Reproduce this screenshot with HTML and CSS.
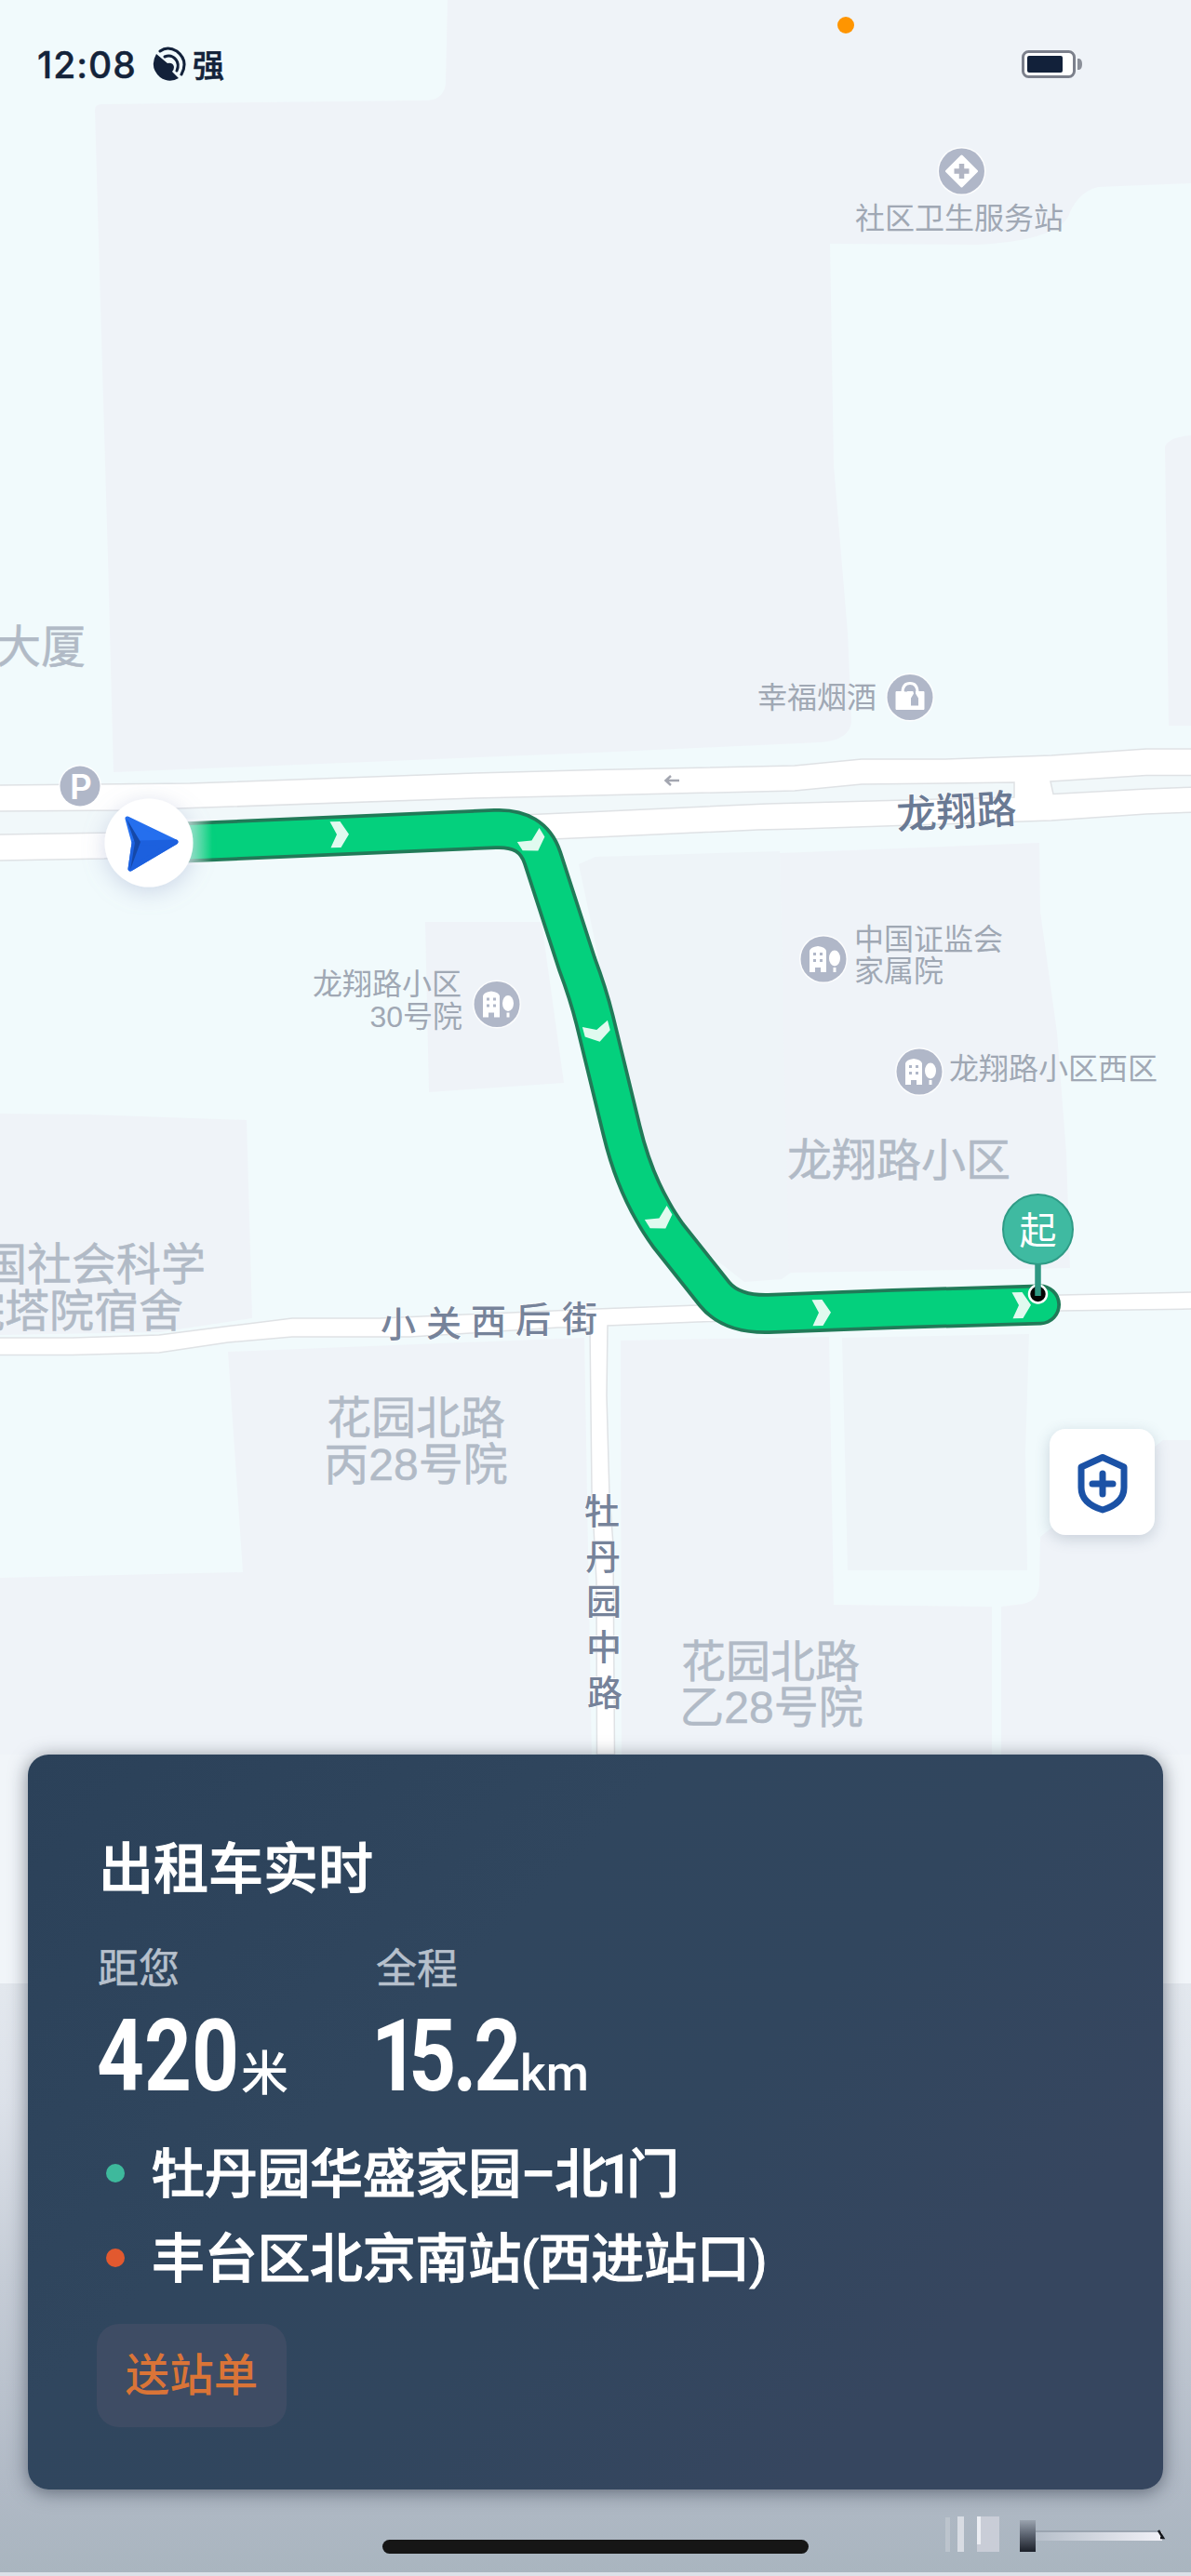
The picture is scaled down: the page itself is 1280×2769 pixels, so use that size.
FILE: index.html
```
<!DOCTYPE html>
<html lang="zh-CN">

<head>
    <meta charset="utf-8">
    <title>出租车实时</title>
    <link rel="stylesheet" href="styles.css">
</head>

<body>
<div class="page">
    <!--地图-->
    <svg class="map" width="1280" height="2769" viewBox="0 0 1280 2769">
        <defs>
            <linearGradient id="fade" x1="0" y1="0" x2="0" y2="1">
                <stop offset="0" stop-color="#e3e8ee" />
                <stop offset="0.2" stop-color="#dce1e9" />
                <stop offset="0.5" stop-color="#c5ccd6" />
                <stop offset="0.85" stop-color="#b0b9c5" />
                <stop offset="1" stop-color="#a9b5bf" />
            </linearGradient>
            <linearGradient id="routeStart" gradientUnits="userSpaceOnUse" x1="203" y1="0" x2="228" y2="0">
                <stop offset="0" stop-color="#fff" stop-opacity="0.6" />
                <stop offset="1" stop-color="#fff" stop-opacity="0" />
            </linearGradient>
            <linearGradient id="barDark" x1="0" y1="0" x2="0" y2="1">
                <stop offset="0" stop-color="#9aa3ae" />
                <stop offset="0.45" stop-color="#5d6572" />
                <stop offset="1" stop-color="#1c2029" />
            </linearGradient>
            <linearGradient id="barLine" x1="0" y1="0" x2="1" y2="0">
                <stop offset="0" stop-color="#b6bfca" />
                <stop offset="1" stop-color="#f1f1f7" />
            </linearGradient>
            <filter id="glow" x="-50%" y="-50%" width="200%" height="200%">
                <feDropShadow dx="0" dy="5" stdDeviation="12" flood-color="#8f9cc4" flood-opacity="0.38" />
            </filter>
            <path id="chevron" d="M-10-14H1L10 0L1 14H-10L-3 0Z" />
            <g id="house">
                <circle r="26" class="halo" />
                <circle r="24.500" class="poi" />
                <path fill="#fff" d="M-15-9Q-14-13-6-14Q2-13 3-9V14H-3V9H-9V14H-15Z" />
                <ellipse cx="12" cy="-1" rx="6" ry="8.500" fill="#fff" />
                <path fill="#fff" d="M10.500 9h3v5h-3z" />
                <path class="poi" d="M-11-7h3v3h-3zM-4-7h3v3h-3zM-11 0h3v3h-3zM-4 0h3v3h-3z" />
            </g>
        </defs>

        <!--地块-->
        <rect width="1280" height="2769" fill="#f1fafc" />
        <g class="land">
            <path d="M102 118Q102 112 110 112L460 108Q477 106 479 90L481 0H1280V197L1180 201Q1160 206 1150 228Q1142 258 1050 263L892 262L896 500L911 680L915 775Q914 796 880 798L640 809L122 830L116 600L105 225Z" />
            <path d="M1252 480Q1256 470 1280 468V780H1256Z" />
            <path class="pale" d="M622 929L640 921L838 915L850 1368L840 1375L800 1378L700 1300Z" />
            <path d="M838 917L1117 906L1118 980L1136 1110L1146 1240L1150 1363L848 1368Z" />
            <path d="M457 991H582L606 1164L461 1174Z" />
            <path d="M0 1197L96 1198L265 1204L271 1417L171 1432L0 1435Z" />
            <path d="M245 1453L628 1438L636 1890H0V1696L261 1690Z" />
            <path d="M667 1441L891 1437L896 1725L1066 1727V1890H668Z" />
            <path class="pale" d="M905 1438L1106 1434L1102 1560L1104 1688H911Z" />
            <path d="M1118 1652L1250 1548H1280V2100H1076V1727L1100 1724Q1118 1720 1117 1700Z" />
        </g>
        <path fill="#f1f5f9" d="M0 1886H1280V2132H0Z" />
        <path fill="url(#fade)" d="M0 2132H1280V2769H0Z" />
        <path fill="#dbe1e8" d="M0 2765H1280V2769H0Z" />

        <!--道路-->
        <g class="road">
            <path d="M-5 844L204 842L510 831L640 827.500L854 823L926 816H1015L1130 812L1232 805H1285V873L1232 875L1130 882L860 891L815 892L640 900L112 923L-5 925Z" />
            <path d="M-5 1438L78 1438L171 1435L249 1425L314 1417H408L640 1407L750 1403L1140 1392L1285 1389V1407L1140 1409L750 1421L653 1425L652 1500L655 1607L659 1660L660.500 1886H641.500L641 1700L636 1603L634 1427L600 1427L441 1437H314L245 1443L171 1454L78 1456.500H-5Z" />
            <g class="median">
                <path d="M-5 872L135 871L510 858L640 855L854 850L926 843L1090 841V857L936 861L824 864L640 872.500L122 895L-5 897Z" />
                <path d="M1129 840L1232 833.500H1285V846L1232 848L1132 853.500Z" />
            </g>
        </g>
        <path d="M730 839H716M721 834L715.500 839L721 844" fill="none" stroke="#a3a6b0" stroke-width="2.500" />

        <!--文字标注-->
        <g class="area">
            <text x="-4" y="712">大厦</text>
            <text x="-67" y="1376">中国社会科学</text>
            <text x="-43" y="1426">院塔院宿舍</text>
            <text x="966" y="1264" text-anchor="middle">龙翔路小区</text>
            <text x="447" y="1541" text-anchor="middle">花园北路</text>
            <text x="447" y="1591" text-anchor="middle">丙28号院</text>
            <text x="828" y="1803" text-anchor="middle">花园北路</text>
            <text x="829" y="1852" text-anchor="middle">乙28号院</text>
        </g>
        <g class="place">
            <text x="919" y="246">社区卫生服务站</text>
            <text x="814" y="761">幸福烟酒</text>
            <text x="496" y="1069" text-anchor="end">龙翔路小区</text>
            <text x="497" y="1104" text-anchor="end">30号院</text>
            <text x="918" y="1021">中国证监会</text>
            <text x="918" y="1055">家属院</text>
            <text x="1020" y="1160">龙翔路小区西区</text>
        </g>
        <g class="street">
            <text class="main" transform="translate(1028 873) rotate(-3)" x="0" y="15" text-anchor="middle">龙翔路</text>
            <text x="409 458 506 554 604" y="1437 1436 1434 1432 1431">小关西后街</text>
            <text x="628 629 630 630 631" y="1638 1687 1735 1784 1833">牡丹园中路</text>
        </g>

        <!--兴趣点图标-->
        <g transform="translate(1033.500 184)">
            <circle r="26" class="halo" />
            <circle r="24.500" class="poi" />
            <path d="M0-16L16 0L0 16L-16 0Z" fill="#fff" stroke="#fff" stroke-width="3" stroke-linejoin="round" />
            <path d="M0-8V8M-8 0H8" stroke="#b1b5c3" stroke-width="5.500" />
        </g>
        <g transform="translate(978 749.500)">
            <circle r="26" class="halo" />
            <circle r="24.500" class="poi" />
            <path d="M-15-6H15V13H-15Z" fill="#fff" stroke="#fff" stroke-linejoin="round" />
            <path d="M-8-5Q-8-15 0-15Q8-15 8-5" fill="none" stroke="#fff" stroke-width="3" />
            <path class="poi" d="M-6-6Q-5-12 0-12Q5-12 6-6V-4L9 1V9H1V1L4-4Q3-9 0-9Q-3-9-3-6Z" />
        </g>
        <use href="#house" x="534" y="1079.500" />
        <use href="#house" x="885" y="1031" />
        <use href="#house" x="988" y="1152" />
        <circle cx="86" cy="845" r="23" class="halo" />
        <circle cx="86" cy="845" r="21.500" class="poi" />
        <text class="parking" x="87" y="858.500" text-anchor="middle">P</text>

        <!--路线-->
        <g class="route">
            <path class="edge" d="M185 906L532 891Q572 889 583 922L620 1036Q632 1068 639 1096L668 1215Q680 1265 702 1303Q708 1314 718 1328L768 1391Q786 1413 826 1412L960 1407L1118 1402.500" />
            <path class="fill" d="M185 906L532 891Q572 889 583 922L620 1036Q632 1068 639 1096L668 1215Q680 1265 702 1303Q708 1314 718 1328L768 1391Q786 1413 826 1412L960 1407L1118 1402.500" />
        </g>
        <rect x="200" y="880" width="40" height="50" fill="url(#routeStart)" />
        <g fill="#fff" fill-opacity="0.88">
            <use href="#chevron" transform="translate(365 897) rotate(-2)" />
            <use href="#chevron" transform="translate(573 906) rotate(58)" />
            <use href="#chevron" transform="translate(642 1110) rotate(75)" />
            <use href="#chevron" transform="translate(710 1312) rotate(58)" />
            <use href="#chevron" transform="translate(883 1411) rotate(-2)" />
            <use href="#chevron" transform="translate(1098 1403) rotate(-2)" />
        </g>

        <!--当前车辆-->
        <g transform="translate(160 906)">
            <circle r="47.500" fill="#fff" filter="url(#glow)" />
            <g stroke-linejoin="round" stroke-width="5">
                <path d="M-23-26L29-1L-20 28L-16 0Z" fill="#256fee" stroke="#256fee" />
                <path d="M-20 28L-16 0L-10 0L29-1Z" fill="#1c60de" stroke="#1c60de" />
                <path d="M-24-26L-9-1L-20 29L-15 0Z" fill="#1548a8" />
            </g>
        </g>

        <!--起点-->
        <circle cx="1115.500" cy="1391" r="9.500" fill="#050505" stroke="#fff" stroke-width="2.500" />
        <path d="M1115.500 1355V1393" stroke="#2f9883" stroke-width="6.500" />
        <circle cx="1115.500" cy="1321.500" r="37.500" fill="#3fbaa1" stroke="#2f9b86" stroke-width="2" />
        <text class="start" x="1115.500" y="1337" text-anchor="middle">起</text>

        <!--右下角竖条-->
        <path d="M1016 2706h5v37h-5z" fill="#bcc4cd" />
        <path d="M1029 2705h7v38h-7z" fill="#d8dce3" />
        <path d="M1050 2705h24v38h-24z" fill="#c9cdd7" />
        <path d="M1050 2705h4v30h-4z" fill="#eceef3" />
        <rect x="1096" y="2709" width="17" height="34" fill="url(#barDark)" />
        <rect x="1113" y="2720" width="134" height="2" fill="#9aa4b0" />
        <rect x="1113" y="2722" width="136" height="9" fill="url(#barLine)" />
        <path d="M1245 2720L1250 2728H1247" fill="none" stroke="#14171c" stroke-width="2.500" />
    </svg>

    <!--状态栏-->
    <div class="status">
        <span class="time">12:08</span>
        <svg class="signal" width="36" height="38" viewBox="0 0 36 38">
            <path fill="#12213a" d="M4 8L16 18Q22 17 23 22Q23 25 21 27L28 34Q18 40 8 33Q-4 22 4 8Z" />
            <path fill="none" stroke="#12213a" stroke-width="3" stroke-linecap="round" d="M8 5Q16-1 26 5Q39 15 31 30" />
            <path fill="none" stroke="#12213a" stroke-width="3" stroke-linecap="round" d="M13 11Q20 8 25 14Q29 19 26 26" />
        </svg>
        <span class="strength">强</span>
        <svg class="battery" width="66" height="32" viewBox="0 0 66 32">
            <rect x="1.500" y="2.500" width="55" height="27" rx="6" fill="#fff" stroke="#7c808c" stroke-width="3" />
            <rect x="6" y="7" width="38" height="18" rx="2" fill="#12213a" />
            <path fill="#8b8f99" d="M60 10h2q3 1 3 6t-3 6h-2z" />
        </svg>
    </div>
    <i class="recording"></i>

    <button class="safety">
        <svg width="60" height="70" viewBox="0 0 60 70">
            <path d="M30 6.500L53 17V39Q53 56 30 63Q7 56 7 39V17Z" />
            <path d="M30 24V46M19 35H41" />
        </svg>
    </button>

    <!--订单卡片-->
    <div class="card">
        <h1>出租车实时</h1>
        <div class="trip">
            <div class="cell">
                <p class="label">距您</p>
                <p class="value"><b class="near">420</b><span class="mi">米</span></p>
            </div>
            <div class="cell">
                <p class="label">全程</p>
                <p class="value"><b class="total"><i>1</i>5.2</b><span>km</span></p>
            </div>
        </div>
        <ul class="stops">
            <li class="from"><span>牡丹园华盛家园<i class="dash">–</i>北<i class="one">1</i>门</span></li>
            <li class="to"><span>丰台区北京南站(西进站口)</span></li>
        </ul>
        <span class="tag">送站单</span>
    </div>
    <i class="home"></i>
</div>
</body>

</html>
```
FILE: styles.css
```
* {
    margin: 0;
    padding: 0;
    box-sizing: border-box;
}
body {
    font-family: "Liberation Sans", "Noto Sans CJK SC", sans-serif;
    background: #f1fafc;
}
i {
    font-style: normal;
}
.page {
    position: relative;
    width: 1280px;
    height: 2769px;
    overflow: hidden;
}

/* 地图 */
.map {
    display: block;
    position: absolute;
    left: 0;
    top: 0;
}
.land {
    fill: #eff3f8;
}
.land .pale {
    fill: #eef4f8;
}
.road {
    fill: #fff;
    stroke: #dfe2e5;
    stroke-width: 1.5;
}
.road .median {
    fill: #f1f8fa;
}
.halo {
    fill: #fff;
    fill-opacity: 0.8;
}
.poi {
    fill: #b0b7c8;
}
.area {
    font-size: 48px;
    fill: #b1bac6;
    stroke: #b1bac6;
    stroke-width: 0.5;
}
.place {
    font-size: 32px;
    fill: #a0a8b4;
}
.street {
    font-family: "Noto Sans CJK SC", sans-serif;
    font-size: 38px;
    font-weight: 500;
    fill: #76839a;
    stroke: #fff;
    stroke-width: 1;
    paint-order: stroke;
}
.street .main {
    font-size: 43px;
    fill: #6a7a94;
}
.parking {
    font-family: Inter, sans-serif;
    font-size: 37px;
    font-weight: 600;
    fill: #fff;
}
.route {
    fill: none;
    stroke-linecap: round;
    stroke-linejoin: round;
}
.route .edge {
    stroke: #217a58;
    stroke-width: 44px;
}
.route .fill {
    stroke: #04d07d;
    stroke-width: 36.5px;
}
.start {
    font-size: 40px;
    fill: #fff;
}

/* 状态栏 */
.status {
    position: relative;
    display: flex;
    align-items: center;
    height: 138px;
    padding: 0 116px 0 40px;
    color: #14233a;
}
.time {
    width: 124px;
    font: 500 39px/1 Inter, sans-serif;
    letter-spacing: 1px;
    -webkit-text-stroke: 0.4px #14233a;
}
.strength {
    margin-left: 7px;
    font-family: "Noto Sans CJK SC", sans-serif;
    font-size: 34px;
    font-weight: 500;
    line-height: 1;
    -webkit-text-stroke: 0.6px #14233a;
}
.battery {
    margin-left: auto;
}
.recording {
    position: absolute;
    left: 900px;
    top: 18px;
    width: 18px;
    height: 18px;
    border-radius: 50%;
    background: #ff9500;
}

.safety {
    position: absolute;
    left: 1128px;
    top: 1536px;
    display: flex;
    align-items: center;
    justify-content: center;
    width: 113px;
    height: 114px;
    border: 0;
    border-radius: 17px;
    background: #fff;
    box-shadow: 0 4px 16px rgba(60, 80, 110, 0.22);
}
.safety svg {
    margin-top: 3px;
}
.safety path {
    fill: none;
    stroke: #1b52a6;
    stroke-width: 7;
    stroke-linecap: round;
    stroke-linejoin: round;
}

/* 订单卡片 */
.card {
    position: absolute;
    left: 30px;
    top: 1886px;
    width: 1220px;
    height: 790px;
    padding: 80px 74px 0;
    border-radius: 22px;
    background: linear-gradient(135deg, #2b4159 0%, #30465e 35%, #31465e 55%, #36465f 80%);
    box-shadow: 0 3px 20px rgba(30, 38, 55, 0.55);
    color: #fff;
}
h1 {
    height: 88px;
    margin-left: 2px;
    font-size: 59px;
    font-weight: 500;
    line-height: 88px;
    -webkit-text-stroke: 1px #fff;
}
.trip {
    display: flex;
    margin-top: 41px;
}
.cell {
    width: 299px;
}
.label {
    margin-left: 1px;
    font-size: 44px;
    line-height: 44px;
    color: #b6c0cc;
    -webkit-text-stroke: 0.5px #b6c0cc;
}
.value {
    display: flex;
    align-items: baseline;
    height: 112px;
    margin-top: 16px;
    font-family: Roboto, "Noto Sans CJK SC", sans-serif;
    font-size: 53px;
    font-weight: 500;
    line-height: 112px;
}
.value b {
    font-size: 107px;
    font-weight: 700;
    transform: scaleX(0.83);
    transform-origin: left;
}
.near {
    width: 155px;
}
.value .total {
    width: 160px;
    margin-left: -4px;
    letter-spacing: -4px;
}
.total i {
    letter-spacing: -13px;
}
.mi {
    font-size: 51px;
}
.stops {
    margin-top: 23px;
    list-style: none;
}
.stops li {
    display: flex;
    align-items: center;
    height: 91px;
    font-size: 57px;
    font-weight: 500;
    letter-spacing: -0.3px;
    white-space: nowrap;
    -webkit-text-stroke: 1px #fff;
}
.stops li span {
    margin-top: -7px;
}
.stops li::before {
    content: "";
    width: 20px;
    height: 20px;
    margin: 0 29px 0 10px;
    border-radius: 50%;
    background: #3eb99c;
}
.stops .to::before {
    background: #e2592f;
}
.dash,
.one {
    font-family: Roboto, sans-serif;
}
.one {
    margin: 0 -6px;
}
.tag {
    display: block;
    width: 204px;
    height: 111px;
    margin-top: 26px;
    border-radius: 24px;
    background: #3e4c64;
    color: #da7437;
    font-size: 47.5px;
    font-weight: 500;
    line-height: 112px;
    text-align: center;
}
.home {
    position: absolute;
    left: 411px;
    top: 2730px;
    width: 458px;
    height: 15px;
    border-radius: 8px;
    background: #161616;
}
```
